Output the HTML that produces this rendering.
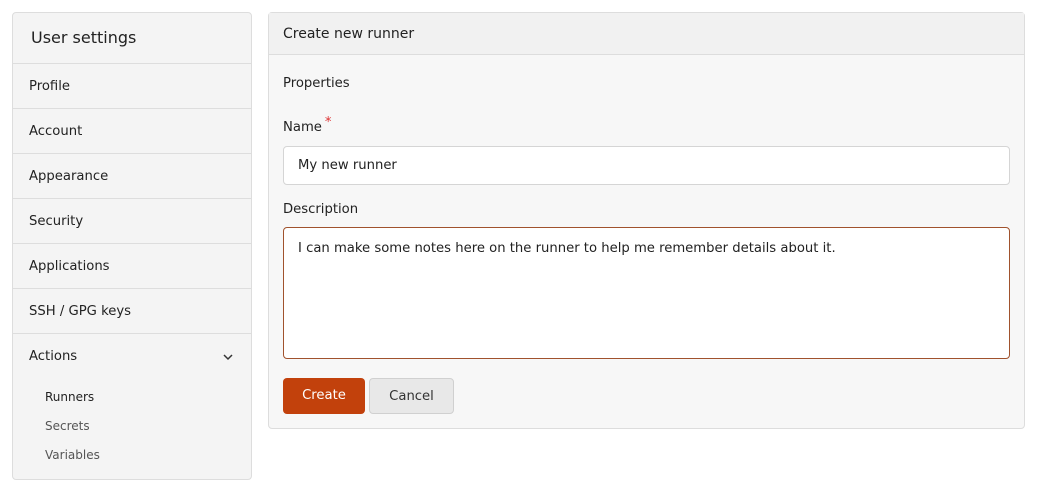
<!DOCTYPE html>
<html><head><style>
*{box-sizing:border-box;margin:0;padding:0}
body{width:1038px;height:480px;background:#fff;font-family:"DejaVu Sans","Liberation Sans",sans-serif;color:#222;font-size:13.2px;position:relative;overflow:hidden}
.side{position:absolute;left:12px;top:12px;width:240px;height:468px;background:#f4f4f4;border:1px solid #ddd;border-radius:4px}
.side .h{height:51px;border-bottom:1px solid #ddd;padding:15px 0 0 18px;font-size:16px}
.side .i{height:45px;border-bottom:1px solid #ddd;padding:15px 0 0 16px}
.side .a{height:45px;padding:15px 0 0 16px;position:relative}
.sub{position:absolute;left:32px;font-size:12px;color:#555}
.main{position:absolute;left:268px;top:12px;width:757px;height:417px;background:#f7f7f7;border:1px solid #ddd;border-radius:4px}
.main .h{height:42px;border-bottom:1px solid #ddd;background:#f1f1f1;padding:13px 0 0 14px;font-size:14px}
.t{position:absolute;left:14px}
.inp{position:absolute;left:14px;width:727px;background:#fff;border:1px solid #d5d5d5;border-radius:4px;padding:0 14px}
.btn{position:absolute;top:365px;height:36px;border-radius:4px;padding-top:10px;text-align:center}
</style></head><body>
<div class="side">
<div class="h">User settings</div>
<div class="i">Profile</div>
<div class="i">Account</div>
<div class="i">Appearance</div>
<div class="i">Security</div>
<div class="i">Applications</div>
<div class="i">SSH / GPG keys</div>
<div class="a">Actions<svg style="position:absolute;left:210px;top:19px" width="10" height="8" viewBox="0 0 10 8"><path d="M1 2l4 4 4-4" fill="none" stroke="#333" stroke-width="1.5"/></svg></div>
<div class="sub" style="top:377px;color:#222">Runners</div>
<div class="sub" style="top:406px">Secrets</div>
<div class="sub" style="top:435px">Variables</div>
</div>
<div class="main">
<div class="h">Create new runner</div>
<div class="t" style="top:63px">Properties</div>
<div class="t" style="top:107px">Name<span style="color:#d33;position:relative;top:-5px;left:3px">*</span></div>
<div class="inp" style="top:133px;height:39px;padding-top:11px">My new runner</div>
<div class="t" style="top:189px">Description</div>
<div class="inp" style="top:214px;height:132px;border-color:#a0522d;padding-top:13px">I can make some notes here on the runner to help me remember details about it.</div>
<div class="btn" style="left:14px;width:82px;background:#c2410c;color:#fff">Create</div>
<div class="btn" style="left:100px;width:85px;background:#e8e8e8;border:1px solid #d0d0d0;color:#333">Cancel</div>
</div>
</body></html>
